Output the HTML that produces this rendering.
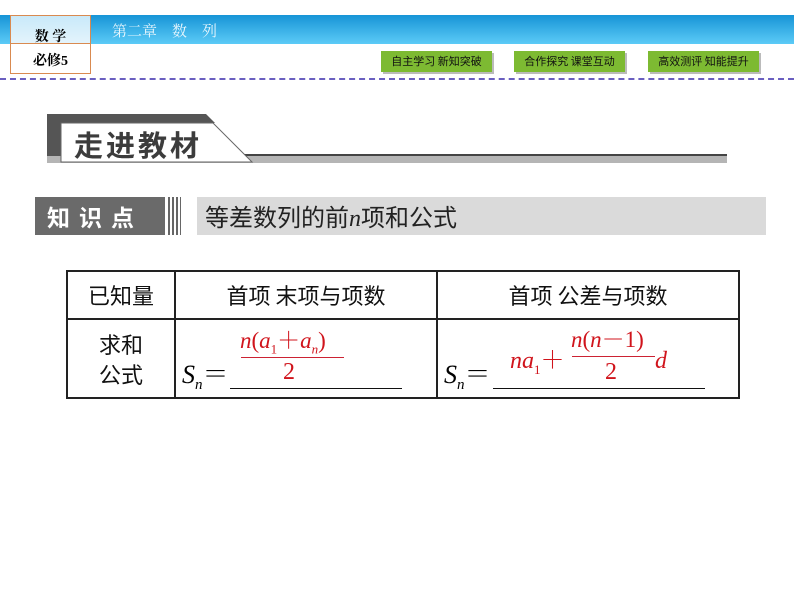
<!DOCTYPE html>
<html><head><meta charset="utf-8"><style>
body{margin:0;width:794px;height:596px;background:#fff;position:relative;overflow:hidden;font-family:"Liberation Sans","Noto Sans CJK SC",sans-serif}
.a{position:absolute}
.bar{left:0;top:15px;width:794px;height:29px;background:linear-gradient(#1794d6,#5ccbf7)}
.btn{top:51px;height:21px;background:#7dba32;box-shadow:2px 2px 0 #bbb;font-size:11px;color:#111;text-align:center;line-height:21px;width:111px;font-family:"Noto Sans CJK SC",sans-serif}
.ser{font-family:"Liberation Serif","Noto Serif CJK SC",serif;line-height:30px}
.red{color:#d0141c}
td{border:2px solid #222;padding:0}
</style></head><body>
<div class="a bar"></div>
<div class="a" style="left:10px;top:15px;width:79px;height:28px;background:linear-gradient(#c9e9f9,#e4f4fc);border:1px solid #d98a50;border-bottom:none"></div>
<div class="a" style="left:10px;top:43px;width:79px;height:29px;border:1px solid #d98a50"></div>
<div class="a" style="left:10px;top:26px;width:81px;text-align:center;font-size:14px;font-weight:bold;font-family:'Liberation Serif','Noto Serif CJK SC',serif">数 学</div>
<div class="a" style="left:10px;top:50px;width:81px;text-align:center;font-size:14px;font-weight:bold;font-family:'Liberation Serif','Noto Serif CJK SC',serif">必修5</div>
<div class="a" style="left:112px;top:20px;font-size:15px;color:#e8f6fd;white-space:pre;font-family:'Liberation Serif','Noto Serif CJK SC',serif">第二章    数    列</div>
<div class="a btn" style="left:381px">自主学习 新知突破</div>
<div class="a btn" style="left:514px">合作探究 课堂互动</div>
<div class="a btn" style="left:648px">高效测评 知能提升</div>
<div class="a" style="left:0;top:78px;width:794px;border-top:2px dashed #6a5fc0"></div>
<svg class="a" style="left:0;top:0" width="794" height="596">
<rect x="47" y="114" width="125" height="45" fill="#555"/>
<polygon points="172,114 206,114 215,123 172,123" fill="#555"/>
<rect x="215" y="154" width="512" height="2" fill="#444"/>
<rect x="47" y="156" width="680" height="7" fill="#b5b5b5"/>
<polygon points="61,123 213,123 252,162 61,162" fill="#fff" stroke="#666" stroke-width="1"/>
<rect x="35" y="197" width="130" height="38" fill="#6a6a6a"/>
<rect x="168" y="197" width="2" height="38" fill="#666"/>
<rect x="172" y="197" width="2" height="38" fill="#666"/>
<rect x="176" y="197" width="2" height="38" fill="#666"/>
<rect x="180" y="197" width="1" height="38" fill="#666"/>
<rect x="197" y="197" width="569" height="38" fill="#dadada"/>
</svg>
<div class="a" style="left:74px;top:123px;font-size:29px;font-weight:bold;color:#3c3c3c;letter-spacing:3px;font-family:'Noto Sans CJK SC',sans-serif;line-height:42px">走进教材</div>
<div class="a" style="left:47px;top:198px;font-size:23px;font-weight:bold;color:#fff;letter-spacing:9px;font-family:'Noto Sans CJK SC',sans-serif;line-height:36px">知识点</div>
<div class="a" style="left:205px;top:198px;font-size:24px;color:#222;line-height:36px;font-family:'Noto Sans CJK SC',sans-serif">等差数列的前<i style="font-family:'Liberation Serif',serif">n</i>项和公式</div>
<table class="a" style="left:66px;top:270px;border-collapse:collapse;font-size:22px;font-family:'Noto Sans CJK SC',sans-serif;color:#111">
<tr style="height:48px"><td style="width:106px;text-align:center">已知量</td><td style="width:260px;text-align:center">首项  末项与项数</td><td style="width:300px;text-align:center">首项  公差与项数</td></tr>
<tr style="height:79px"><td style="text-align:center;line-height:30px">求和<br>公式</td><td></td><td></td></tr>
</table>
<div class="a ser" style="left:182px;top:360px;font-size:26px"><i>S</i><sub style="font-size:15px"><i>n</i></sub>＝</div>
<div class="a" style="left:230px;top:388px;width:172px;border-top:1px solid #111"></div>
<div class="a ser red" style="left:240px;top:326px;font-size:23px"><i>n</i>(<i>a</i><sub style="font-size:13px">1</sub>＋<i>a</i><sub style="font-size:13px"><i>n</i></sub>)</div>
<div class="a" style="left:241px;top:357px;width:103px;border-top:1px solid #c23"></div>
<div class="a ser red" style="left:283px;top:357px;font-size:24px">2</div>
<div class="a ser" style="left:444px;top:360px;font-size:26px"><i>S</i><sub style="font-size:15px"><i>n</i></sub>＝</div>
<div class="a" style="left:493px;top:388px;width:212px;border-top:1px solid #111"></div>
<div class="a ser red" style="left:510px;top:346px;font-size:24px"><i>na</i><sub style="font-size:13px">1</sub>＋</div>
<div class="a ser red" style="left:571px;top:325px;font-size:23px"><i>n</i>(<i>n</i>－1)</div>
<div class="a" style="left:572px;top:356px;width:83px;border-top:1px solid #c23"></div>
<div class="a ser red" style="left:605px;top:357px;font-size:24px">2</div>
<div class="a ser red" style="left:655px;top:346px;font-size:24px"><i>d</i></div>
</body></html>
